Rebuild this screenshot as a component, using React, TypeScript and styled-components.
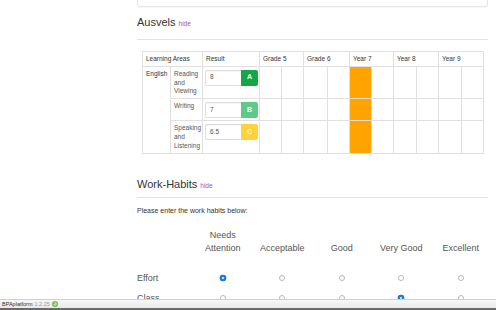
import React from "react";
import styled, { createGlobalStyle } from "styled-components";

const GlobalStyle = createGlobalStyle`
  html, body {
    margin: 0;
    padding: 0;
    background: #ffffff;
    font-family: "Liberation Sans", Arial, sans-serif;
    color: #333;
  }
`;

const Page = styled.div`
  width: 351px;
  margin-left: 137px;
  padding-bottom: 40px;
`;

const TopPanel = styled.div`
  height: 6px;
  border: 1px solid #e6e6e6;
  border-top: none;
  border-radius: 0 0 3px 3px;
  box-shadow: 0 1px 1px rgba(0, 0, 0, 0.03);
`;

const SectionTitle = styled.h2<{ gap: number }>`
  margin: ${(p) => p.gap}px 0 0 0;
  font-size: 11px;
  line-height: 14px;
  font-weight: normal;
  color: #333;
`;

const Hide = styled.a`
  font-size: 6.5px;
  color: #9a4fc2;
  margin-left: 3px;
  text-decoration: none;
`;

const Rule = styled.hr<{ gap: number }>`
  border: none;
  border-top: 1px solid #e3e3e3;
  margin: ${(p) => p.gap}px 0 0 0;
`;

const GradeTable = styled.table`
  margin: 11px 0 0 5px;
  border-collapse: collapse;
  table-layout: fixed;
  width: 341px;
  font-size: 6.5px;
  line-height: 8.8px;
  color: #333;
`;

const Th = styled.th`
  border: 1px solid #e0e0e0;
  font-weight: normal;
  text-align: left;
  padding: 3px 3px 2px 3px;
`;

const Td = styled.td<{ fill?: string }>`
  border: 1px solid #e0e0e0;
  padding: 3px 2px 2px 3px;
  vertical-align: top;
  background: ${(p) => p.fill || "transparent"};
  color: #555;
`;

const ResultTd = styled.td`
  border: 1px solid #e0e0e0;
  padding: 3px 2px 2px 2px;
  vertical-align: top;
`;

const ResultGroup = styled.div`
  display: flex;
  width: 53px;
  height: 16px;
`;

const ResultInput = styled.div`
  flex: 1;
  border: 1px solid #dedede;
  border-right: none;
  border-radius: 2px 0 0 2px;
  box-sizing: border-box;
  padding-left: 4px;
  display: flex;
  align-items: center;
  font-size: 6.5px;
  color: #555;
  box-shadow: inset 0 1px 1px rgba(0, 0, 0, 0.04);
`;

const Badge = styled.div<{ color: string }>`
  width: 17px;
  background: ${(p) => p.color};
  border-radius: 0 2px 2px 0;
  color: #fff;
  font-weight: bold;
  font-size: 7px;
  display: flex;
  align-items: center;
  justify-content: center;
`;

const Intro = styled.p`
  margin: 8px 0 0 0;
  font-size: 7px;
  line-height: 9px;
  color: #333;
`;

const HabitGrid = styled.div`
  display: grid;
  grid-template-columns: 56px repeat(5, 59.5px);
  margin-top: 14px;
  font-size: 9px;
  color: #555;
`;

const HabitHead = styled.div`
  text-align: center;
  line-height: 13px;
  align-self: end;
`;

const Spacer = styled.div`
  height: 13px;
  grid-column: 1 / -1;
`;

const HabitLabel = styled.div`
  height: 20px;
  line-height: 20px;
`;

const RadioCell = styled.div`
  height: 20px;
  display: flex;
  align-items: center;
  justify-content: center;
`;

const Radio = styled.span<{ checked?: boolean }>`
  width: 6px;
  height: 6px;
  border-radius: 50%;
  box-sizing: border-box;
  border: ${(p) => (p.checked ? "2px solid #1c7cf2" : "0.6px solid #b8b8b8")};
  background: #fff;
  box-shadow: ${(p) => (p.checked ? "0 0 0 0.3px #1466d4" : "none")};
`;

const Footer = styled.div`
  position: fixed;
  left: 0;
  right: 0;
  bottom: 0;
  height: 11px;
  box-sizing: border-box;
  background: linear-gradient(#f7f7f7, #e9e9e9);
  border-top: 1px solid #d0d0d0;
  border-bottom: 2px solid #6a6a6a;
  display: flex;
  align-items: center;
  padding-left: 2px;
  gap: 2px;
  font-size: 5.5px;
`;

const Brand = styled.span`
  color: #333;
`;

const Version = styled.span`
  color: #999;
`;

const rows = [
  { area: "Reading and Viewing", value: "8", grade: "A", color: "#15a744" },
  { area: "Writing", value: "7", grade: "B", color: "#5ec98a" },
  { area: "Speaking and Listening", value: "6.5", grade: "C", color: "#fdd23a" },
];

const colWidths = [28, 32, 57, 22, 22, 24, 22, 22, 22, 23, 22, 23, 22];
const grades = ["Grade 5", "Grade 6", "Year 7", "Year 8", "Year 9"];
const habits = ["Acceptable", "Good", "Very Good", "Excellent"];

function App() {
  return (
    <>
      <GlobalStyle />
      <Page>
        <TopPanel />
        <SectionTitle gap={8}>
          Ausvels<Hide>hide</Hide>
        </SectionTitle>
        <Rule gap={8} />
        <GradeTable>
          <colgroup>
            {colWidths.map((w, i) => (
              <col key={i} style={{ width: w }} />
            ))}
          </colgroup>
          <thead>
            <tr>
              <Th colSpan={2}>Learning Areas</Th>
              <Th>Result</Th>
              {grades.map((g) => (
                <Th key={g} colSpan={2}>
                  {g}
                </Th>
              ))}
            </tr>
          </thead>
          <tbody>
            {rows.map((r, i) => (
              <tr key={r.area}>
                {i === 0 && (
                  <Td rowSpan={3} style={{ color: "#333" }}>
                    English
                  </Td>
                )}
                <Td>{r.area}</Td>
                <ResultTd>
                  <ResultGroup>
                    <ResultInput>{r.value}</ResultInput>
                    <Badge color={r.color}>{r.grade}</Badge>
                  </ResultGroup>
                </ResultTd>
                {Array.from({ length: 10 }).map((_, j) => (
                  <Td key={j} fill={j === 4 ? "#ffa300" : undefined} />
                ))}
              </tr>
            ))}
          </tbody>
        </GradeTable>

        <SectionTitle gap={23}>
          Work-Habits<Hide>hide</Hide>
        </SectionTitle>
        <Rule gap={4} />
        <Intro>Please enter the work habits below:</Intro>
        <HabitGrid>
          <div />
          <HabitHead>
            Needs
            <br />
            Attention
          </HabitHead>
          {habits.map((h) => (
            <HabitHead key={h}>{h}</HabitHead>
          ))}
          <Spacer />
          <HabitLabel>Effort</HabitLabel>
          {[0, 1, 2, 3, 4].map((k) => (
            <RadioCell key={k}>
              <Radio checked={k === 0} />
            </RadioCell>
          ))}
          <HabitLabel>Class</HabitLabel>
          {[0, 1, 2, 3, 4].map((k) => (
            <RadioCell key={k}>
              <Radio checked={k === 3} />
            </RadioCell>
          ))}
        </HabitGrid>
      </Page>
      <Footer>
        <Brand>BPAplatform</Brand>
        <Version>1.2.25</Version>
        <svg width="6" height="6" viewBox="0 0 12 12">
          <circle cx="6" cy="6" r="6" fill="#6cbf3c" />
          <path d="M3.5 6 A2.5 2.5 0 1 0 6 3.5" stroke="#fff" strokeWidth="1.4" fill="none" />
          <path d="M5 2 L7 3.5 L5 5 Z" fill="#fff" />
        </svg>
      </Footer>
    </>
  );
}

export default App;
